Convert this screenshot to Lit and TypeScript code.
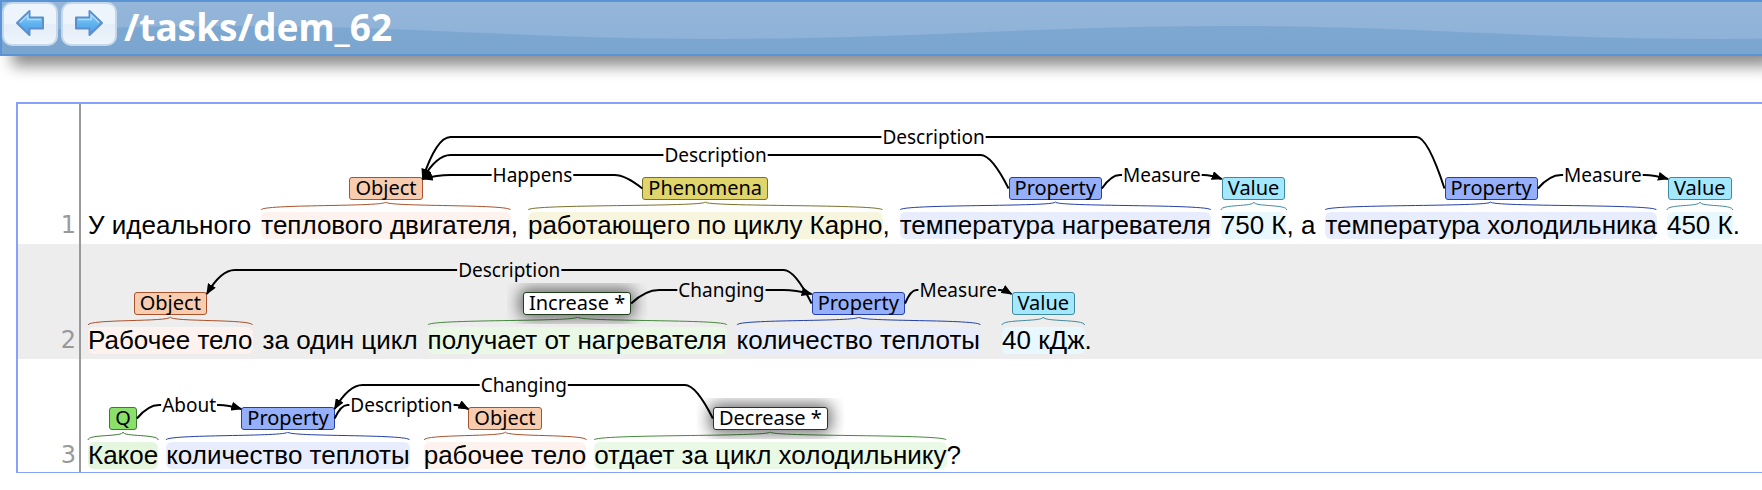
import { LitElement, html, svg, css, nothing } from "lit";
import { customElement, property, state } from "lit/decorators.js";

type Kind = "object" | "phenomena" | "property" | "value" | "process" | "question";
type Gap = "none" | "small" | "medium" | "large" | "wide";

interface Chunk {
  text: string;
  gap?: Gap;
  id?: string;
  kind?: Kind;
  label?: string;
  marked?: boolean;
}

interface Arc {
  from: string;
  to: string;
  label: string;
  level: number;
}

interface Sentence {
  chunks: Chunk[];
  arcs: Arc[];
}

interface DrawnArc {
  label: string;
  labelX: number;
  y: number;
  left: string;
  right: string;
  arrowLeft: boolean;
}

const SENTENCES: Sentence[] = [
  {
    chunks: [
      { text: "У идеального" },
      { text: "теплового двигателя", gap: "medium", id: "t1", kind: "object", label: "Object" },
      { text: ",", gap: "none" },
      { text: "работающего по циклу Карно", gap: "medium", id: "t2", kind: "phenomena", label: "Phenomena" },
      { text: ",", gap: "none" },
      { text: "температура нагревателя", gap: "medium", id: "t3", kind: "property", label: "Property" },
      { text: "750 К", gap: "medium", id: "t4", kind: "value", label: "Value" },
      { text: ", а", gap: "none" },
      { text: "температура холодильника", gap: "medium", id: "t5", kind: "property", label: "Property" },
      { text: "450 К", gap: "medium", id: "t6", kind: "value", label: "Value" },
      { text: ".", gap: "none" },
    ],
    arcs: [
      { from: "t5", to: "t1", label: "Description", level: 3 },
      { from: "t3", to: "t1", label: "Description", level: 2 },
      { from: "t2", to: "t1", label: "Happens", level: 1 },
      { from: "t3", to: "t4", label: "Measure", level: 1 },
      { from: "t5", to: "t6", label: "Measure", level: 1 },
    ],
  },
  {
    chunks: [
      { text: "Рабочее тело", id: "t1", kind: "object", label: "Object" },
      { text: "за один цикл", gap: "medium" },
      { text: "получает от нагревателя", gap: "medium", id: "t2", kind: "process", label: "Increase *", marked: true },
      { text: "количество теплоты", gap: "medium", id: "t3", kind: "property", label: "Property" },
      { text: "40 кДж", gap: "wide", id: "t4", kind: "value", label: "Value" },
      { text: ".", gap: "none" },
    ],
    arcs: [
      { from: "t3", to: "t1", label: "Description", level: 2 },
      { from: "t2", to: "t3", label: "Changing", level: 1 },
      { from: "t3", to: "t4", label: "Measure", level: 1 },
    ],
  },
  {
    chunks: [
      { text: "Какое", id: "t1", kind: "question", label: "Q" },
      { text: "количество теплоты", gap: "small", id: "t2", kind: "property", label: "Property" },
      { text: "рабочее тело", gap: "large", id: "t3", kind: "object", label: "Object" },
      { text: "отдает за цикл холодильнику", gap: "small", id: "t4", kind: "process", label: "Decrease *", marked: true },
      { text: "?", gap: "none" },
    ],
    arcs: [
      { from: "t1", to: "t2", label: "About", level: 1 },
      { from: "t2", to: "t3", label: "Description", level: 1 },
      { from: "t4", to: "t2", label: "Changing", level: 2 },
    ],
  },
];

const LEVEL_OFFSET: Record<number, number> = { 1: 2, 2: 22, 3: 40 };
const ARC_FONT = '19px "Noto Sans", "Open Sans", sans-serif';

@customElement("sentence-row")
export class SentenceRow extends LitElement {
  @property({ attribute: false }) sentence!: Sentence;
  @property({ type: Number }) number = 1;
  @state() private drawn: DrawnArc[] = [];

  private observer?: ResizeObserver;

  static styles = css`
    :host {
      display: grid;
      grid-template-columns: 63px 1fr;
    }
    .number {
      display: flex;
      align-items: flex-end;
      justify-content: flex-end;
      padding: 0 3px 5px 0;
      border-right: 2px solid #999;
      color: #999;
      font: 24px/27px "DejaVu Sans", sans-serif;
    }
    .canvas {
      position: relative;
      display: flex;
      align-items: flex-end;
      padding: 48px 0 5px 7px;
      white-space: nowrap;
    }
    .canvas.tall {
      padding-top: 73px;
    }
    :host(:last-of-type) .canvas,
    :host(:last-of-type) .number {
      padding-bottom: 3px;
    }
    .chunk {
      display: flex;
      flex-direction: column;
      align-items: center;
      color: #000;
      font: 26px/27px "Liberation Sans", Arial, sans-serif;
    }
    .small {
      margin-left: 8px;
    }
    .medium {
      margin-left: 10px;
    }
    .large {
      margin-left: 14px;
    }
    .wide {
      margin-left: 22px;
    }
    .tag {
      box-sizing: border-box;
      height: 23px;
      padding: 0 5px;
      border: 1px solid var(--line);
      border-radius: 3px;
      background: var(--fill);
      font: 20px/20px "Noto Sans", "Open Sans", sans-serif;
    }
    .marked {
      background: #fff;
      border-color: #1f3d1a;
      box-shadow: 0 0 16px 3px rgba(0, 0, 0, 0.6);
      clip-path: inset(-9px -16px -9px -16px);
    }
    .brace {
      width: 0;
      min-width: 100%;
      height: 8px;
      margin: 2px 0;
      overflow: visible;
      fill: none;
      stroke: var(--line);
    }
    .text {
      border-radius: 6px;
      background: var(--tint);
      white-space: pre;
    }
    .object {
      --fill: #f7ccaf;
      --line: #a9522b;
      --tint: #fdf2ee;
    }
    .phenomena {
      --fill: #e0d56b;
      --line: #79702c;
      --tint: #f8f5de;
    }
    .property {
      --fill: #95affa;
      --line: #2340a8;
      --tint: #e8edfe;
    }
    .value {
      --fill: #a3e8fd;
      --line: #3f8aa0;
      --tint: #e9f8fe;
    }
    .process {
      --fill: #fff;
      --line: #43893a;
      --tint: #eaf9e6;
    }
    .question {
      --fill: #8ae06b;
      --line: #3f7a34;
      --tint: #e4f6de;
    }
    .arcs {
      position: absolute;
      inset: 0;
      width: 100%;
      height: 100%;
      overflow: visible;
      pointer-events: none;
    }
    .arc {
      fill: none;
      stroke: #000;
      stroke-width: 2px;
    }
    .arc-label {
      fill: #000;
      font: 19px "Noto Sans", "Open Sans", sans-serif;
      text-anchor: middle;
    }
  `;

  firstUpdated() {
    this.observer = new ResizeObserver(() => this.measure());
    this.observer.observe(this);
    this.measure();
    document.fonts.ready.then(() => this.measure());
  }

  disconnectedCallback() {
    super.disconnectedCallback();
    this.observer?.disconnect();
  }

  private measure() {
    const canvas = this.renderRoot.querySelector(".canvas")!.getBoundingClientRect();
    const pen = document.createElement("canvas").getContext("2d")!;
    pen.font = ARC_FONT;
    const box = (id: string) =>
      this.renderRoot.querySelector(`[data-id="${id}"]`)!.getBoundingClientRect();

    this.drawn = this.sentence.arcs.map((arc) => {
      const from = box(arc.from);
      const to = box(arc.to);
      const arrowLeft = to.left < from.left;
      const l = (arrowLeft ? to.right : from.right) - canvas.left;
      const r = (arrowLeft ? from.left : to.left) - canvas.left;
      const top = from.top - canvas.top;
      const y = top - LEVEL_OFFSET[arc.level];
      const tip = top + 2;
      const middle = top + from.height / 2;
      const center = (l + r) / 2;
      const half = pen.measureText(arc.label).width / 2 + 1;
      const curve = Math.min(28, center - half - l - 2);
      const bend = curve * 0.6;
      const leftEnd = arrowLeft ? tip : middle;
      const rightEnd = arrowLeft ? middle : tip;
      return {
        label: arc.label,
        labelX: center,
        y,
        arrowLeft,
        left: `M${center - half},${y}H${l + curve}Q${l + curve / 2},${y} ${l},${leftEnd}`,
        right: `M${center + half},${y}H${r - curve}Q${r - bend},${y} ${r},${rightEnd}`,
      };
    });
  }

  private renderChunk(chunk: Chunk) {
    return html`
      <span class="chunk ${chunk.gap ?? "none"} ${chunk.kind ?? ""}">
        ${chunk.kind
          ? html`
              <span class="tag ${chunk.marked ? "marked" : ""}" data-id=${chunk.id!}>${chunk.label}</span>
              <svg class="brace" viewBox="0 0 100 8" preserveAspectRatio="none" aria-hidden="true">
                <path vector-effect="non-scaling-stroke" d="M0,8C0,2 50,5 50,0C50,5 100,2 100,8" />
              </svg>
            `
          : nothing}
        <span class="text">${chunk.text}</span>
      </span>
    `;
  }

  render() {
    const tall = this.sentence.arcs.some((arc) => arc.level > 2);
    return html`
      <div class="number">${this.number}</div>
      <div class="canvas ${tall ? "tall" : ""}">
        ${this.sentence.chunks.map((chunk) => this.renderChunk(chunk))}
        <svg class="arcs">
          <defs>
            <marker id="head" markerUnits="userSpaceOnUse" markerWidth="11" markerHeight="9" refX="10" refY="4.5" orient="auto">
              <path d="M0,0L11,4.5L0,9Z" />
            </marker>
          </defs>
          ${this.drawn.map(
            (arc) => svg`
              <path class="arc" d=${arc.left} marker-end=${arc.arrowLeft ? "url(#head)" : "none"} />
              <path class="arc" d=${arc.right} marker-end=${arc.arrowLeft ? "none" : "url(#head)"} />
              <text class="arc-label" x=${arc.labelX} y=${arc.y + 7}>${arc.label}</text>
            `,
          )}
        </svg>
      </div>
    `;
  }
}

@customElement("app-root")
export class AppRoot extends LitElement {
  static styles = css`
    :host {
      display: block;
      overflow: hidden;
      background: #fff;
    }
    .header {
      position: relative;
      display: flex;
      align-items: flex-start;
      gap: 3px;
      box-sizing: border-box;
      height: 56px;
      border: 2px solid #5a94d5;
      border-right: 0;
      background: linear-gradient(#80aad1, #7aa5cf);
      box-shadow: 12px 10px 14px rgba(0, 0, 0, 0.45);
    }
    .wave {
      position: absolute;
      inset: 0;
      width: 100%;
      height: 100%;
    }
    .nav {
      position: relative;
      display: grid;
      place-items: center;
      box-sizing: border-box;
      width: 56px;
      height: 44px;
      padding: 0 0 3px;
      border: 2px solid #c5d8eb;
      border-radius: 10px;
      background: linear-gradient(#edf4fc 50%, #e4eef9 50%, #edf4fb);
    }
    .nav svg {
      width: 30px;
      height: 28px;
    }
    .title {
      position: relative;
      margin: 0 0 0 4px;
      color: #fff;
      font: bold 37px/50px "Noto Sans", "Open Sans", sans-serif;
    }
    .panel {
      margin: 46px 0 17px 16px;
      border: 2px solid #86a1fa;
      border-right: 0;
      border-bottom-width: 1px;
    }
    sentence-row:nth-of-type(even) {
      background: #ededed;
    }
  `;

  private arrow(flipped: boolean) {
    return html`
      <svg viewBox="0 0 30 28" aria-hidden="true">
        <defs>
          <linearGradient id="ice" x1="0" y1="0" x2="0" y2="1">
            <stop offset="0" stop-color="#8fd2fa" />
            <stop offset="0.55" stop-color="#5fb2f0" />
            <stop offset="1" stop-color="#4a98e4" />
          </linearGradient>
        </defs>
        <g transform=${flipped ? "translate(30 0) scale(-1 1)" : ""}>
          <path
            d="M2,14L14.500,2V8.500H28V19.500H14.500V26Z"
            fill="url(#ice)"
            stroke="#5c8fcb"
            stroke-width="2"
            stroke-linejoin="round"
          />
          <path d="M5,13.500L12.800,6V10.500H26" fill="none" stroke="#a9dcfb" stroke-width="1.500" />
        </g>
      </svg>
    `;
  }

  render() {
    return html`
      <header class="header">
        <svg class="wave" aria-hidden="true">
          <defs>
            <linearGradient id="gloss" x1="0" y1="0" x2="0" y2="1">
              <stop offset="0" stop-color="#95b6d8" />
              <stop offset="1" stop-color="#8eb2d9" />
            </linearGradient>
            <pattern id="swell" x="223" width="1000" height="52" patternUnits="userSpaceOnUse">
              <path d="M0,0H1000V24C820,24 680,37 490,37C310,37 190,24 0,24Z" fill="url(#gloss)" />
            </pattern>
          </defs>
          <rect width="100%" height="100%" fill="url(#swell)" />
        </svg>
        <button class="nav" type="button" aria-label="Previous document">${this.arrow(false)}</button>
        <button class="nav" type="button" aria-label="Next document">${this.arrow(true)}</button>
        <h1 class="title">/tasks/dem_62</h1>
      </header>
      <main class="panel">
        ${SENTENCES.map(
          (sentence, i) => html`<sentence-row .sentence=${sentence} .number=${i + 1}></sentence-row>`,
        )}
      </main>
    `;
  }
}
